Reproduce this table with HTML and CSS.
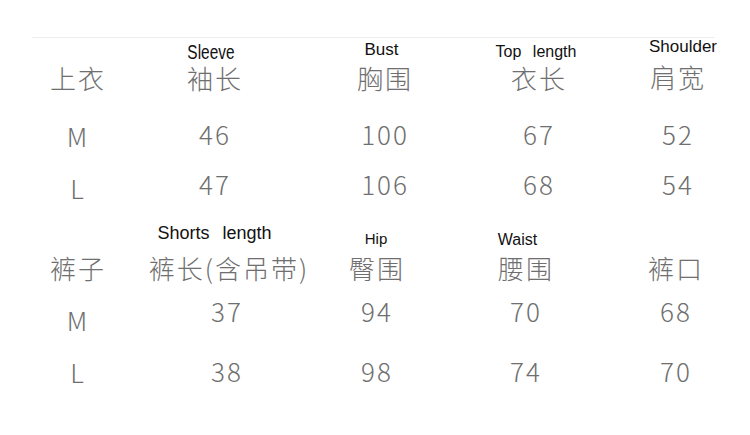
FILE: index.html
```html
<!DOCTYPE html>
<html lang="zh">
<head>
<meta charset="utf-8">
<title>尺码表</title>
<link rel="stylesheet" href="styles.css">
</head>
<body>
<main class="chart">
  <div class="rule"></div>

  <section class="block block-top">
    <div class="row labels">
      <span></span>
      <span class="lbl lbl-sleeve">Sleeve</span>
      <span class="lbl lbl-bust">Bust</span>
      <span class="lbl lbl-top">Top length</span>
      <span class="lbl lbl-shoulder">Shoulder</span>
    </div>
    <div class="row head">
      <span>上衣</span><span>袖长</span><span>胸围</span><span>衣长</span><span class="head-shoulder">肩宽</span>
    </div>
    <div class="row vals vals-m">
      <span class="sz">M</span><span>46</span><span>100</span><span>67</span><span>52</span>
    </div>
    <div class="row vals vals-l">
      <span class="sz">L</span><span>47</span><span>106</span><span>68</span><span>54</span>
    </div>
  </section>

  <section class="block block-bottom">
    <div class="row labels">
      <span></span>
      <span class="lbl lbl-shorts">Shorts length</span>
      <span class="lbl lbl-hip">Hip</span>
      <span class="lbl lbl-waist">Waist</span>
      <span></span>
    </div>
    <div class="row head">
      <span>裤子</span><span class="head-long">裤长(含吊带)</span><span>臀围</span><span>腰围</span><span>裤口</span>
    </div>
    <div class="row vals vals-m">
      <span class="sz">M</span><span>37</span><span>94</span><span>70</span><span>68</span>
    </div>
    <div class="row vals vals-l">
      <span class="sz">L</span><span>38</span><span>98</span><span>74</span><span>70</span>
    </div>
  </section>
</main>
</body>
</html>
```

FILE: styles.css
```css
* { box-sizing: border-box; }

html, body {
  margin: 0;
  padding: 0;
  background: #ffffff;
}

body {
  width: 750px;
  height: 435px;
  overflow: hidden;
  font-family: "Noto Sans CJK SC", "Noto Sans", sans-serif;
  color: #6f6f6f;
}

.chart {
  padding-top: 37px;
}

.rule {
  height: 1px;
  background: #ededed;
  margin: 0 35px 0 32px;
}

.row {
  display: grid;
}

.row > * {
  display: block;
  text-align: center;
  white-space: nowrap;
}

.block-top .row {
  grid-template-columns: 154px 120px 220px 88px 1fr;
}

.block-top .row > :nth-child(5) {
  padding-left: 22px;
}

.block-bottom .row {
  grid-template-columns: 154px 144px 156px 142px 1fr;
}

.block-bottom .row > :nth-child(5) {
  padding-left: 4px;
}

/* English labels */
.labels {
  align-items: end;
  font-family: "Liberation Sans", Arial, sans-serif;
  color: #111111;
  line-height: 1;
}

.block-top .labels { height: 27px; }
.block-bottom .labels { height: 58px; }

.lbl-sleeve {
  font-size: 20px;
  padding-right: 8px;
  padding-bottom: 3px;
  transform: scaleX(0.77);
}

.lbl-bust {
  font-size: 17px;
  padding-right: 5px;
  padding-bottom: 7px;
}

.lbl-top {
  font-size: 16px;
  word-spacing: 7px;
  padding-right: 4px;
  padding-bottom: 5px;
}

.block-top .labels > .lbl-shoulder {
  font-size: 17px;
  padding-left: 34px;
  padding-bottom: 10px;
}

.lbl-shorts {
  font-size: 18px;
  word-spacing: 8px;
  padding-right: 23px;
  padding-bottom: 13px;
}

.lbl-hip {
  font-size: 15px;
  padding-bottom: 9px;
}

.lbl-waist {
  font-size: 16px;
  padding-right: 15px;
  padding-bottom: 7px;
}

/* Chinese headers and values */
.head,
.vals {
  font-size: 26px;
  font-weight: 300;
  line-height: 26px;
  letter-spacing: 2px;
  text-indent: 2px;
}

.head-long {
  margin: 0 -12px 0 -8px;
}

.head-shoulder {
  margin-top: -1px;
  margin-bottom: 1px;
}

.block-top .vals-m { margin-top: 30px; }
.block-top .vals-l { margin-top: 24px; }
.block-bottom .vals-m { margin-top: 17px; }
.block-bottom .vals-l { margin-top: 34px; }

.block-top .vals-m .sz { padding-top: 2px; margin-bottom: -2px; }
.block-top .vals-l .sz { padding-top: 4px; margin-bottom: -4px; }
.block-bottom .vals-m .sz { padding-top: 9px; margin-bottom: -9px; }
.block-bottom .vals-l .sz { padding-top: 1px; margin-bottom: -1px; }
```
